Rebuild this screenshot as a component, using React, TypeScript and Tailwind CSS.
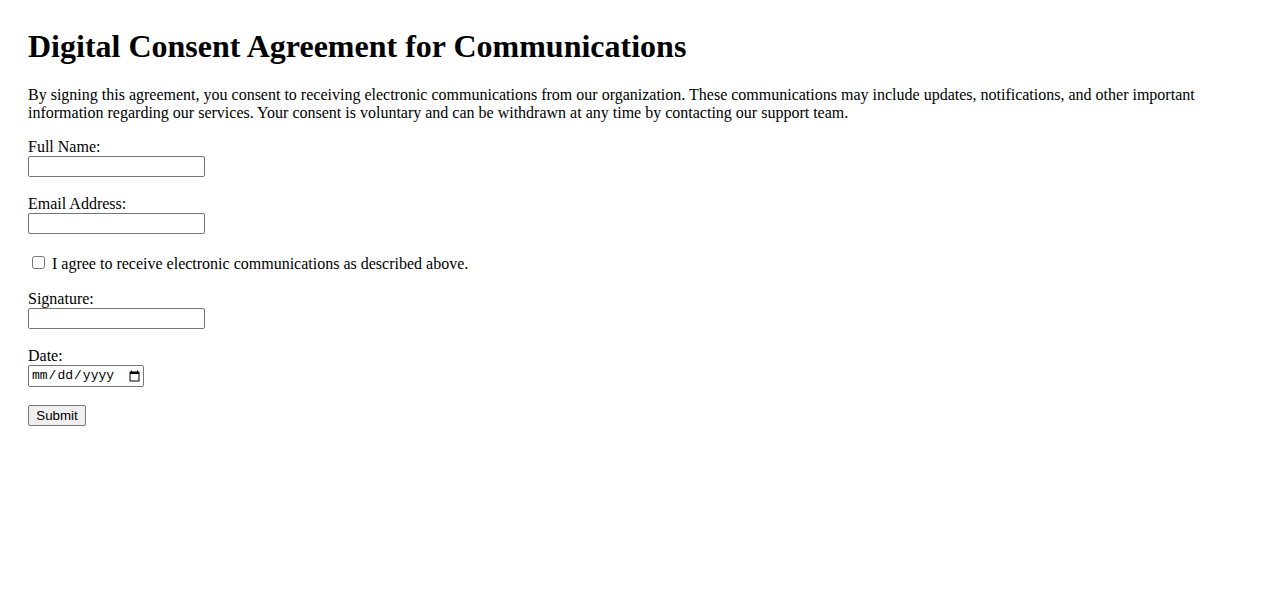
import React, { useState } from 'react';

// Plain consent form, browser-default look
const Field: React.FC<{ label: string; type?: string; id: string }> = ({ label, type = 'text', id }) => (
  <div className="flex flex-col items-start mb-[18px]">
    <label htmlFor={id} className="block text-[16px] leading-[18px] text-black">
      {label}
    </label>
    <input
      id={id}
      type={type}
      className="block w-[177px] h-[21px] border border-[#767676] rounded-[2px] bg-white px-[2px] text-[13px] font-['Liberation_Sans',sans-serif] outline-none"
    />
  </div>
);

export default function App() {
  const [agreed, setAgreed] = useState(false);

  return (
    <div className="min-h-screen bg-white p-[28px] font-['Liberation_Serif',serif] text-black">
      <h1 className="text-[32px] leading-[37px] font-bold mb-[21px]">
        Digital Consent Agreement for Communications
      </h1>
      <p className="text-[16px] leading-[18px] mb-[16px]">
        By signing this agreement, you consent to receiving electronic communications from our organization. These
        communications may include updates, notifications, and other important information regarding our services. Your
        consent is voluntary and can be withdrawn at any time by contacting our support team.
      </p>

      <form className="flex flex-col items-start" onSubmit={(e) => e.preventDefault()}>
        <Field id="name" label="Full Name:" />
        <Field id="email" label="Email Address:" type="email" />

        <div className="flex items-center h-[20px] mb-[18px]">
          <input
            id="agree"
            type="checkbox"
            checked={agreed}
            onChange={(e) => setAgreed(e.target.checked)}
            className="w-[13px] h-[13px] ml-[4px] mr-[3px] my-[3px]"
          />
          <label htmlFor="agree" className="text-[16px] leading-[18px] ml-[4px] mt-[3px]">
            I agree to receive electronic communications as described above.
          </label>
        </div>

        <Field id="signature" label="Signature:" />

        <div className="flex flex-col items-start mb-[18px]">
          <label htmlFor="date" className="block text-[16px] leading-[18px]">
            Date:
          </label>
          <input
            id="date"
            type="date"
            className="block w-[116px] h-[22px] border border-[#767676] rounded-[2px] bg-white pl-[2px] text-[13px] font-['Liberation_Mono',monospace]"
          />
        </div>

        <button
          type="submit"
          className="h-[21px] w-[58px] border border-[#767676] rounded-[2px] bg-[#efefef] text-[13.33px] leading-[15px] font-['Liberation_Sans',sans-serif] text-black"
        >
          Submit
        </button>
      </form>
    </div>
  );
}
